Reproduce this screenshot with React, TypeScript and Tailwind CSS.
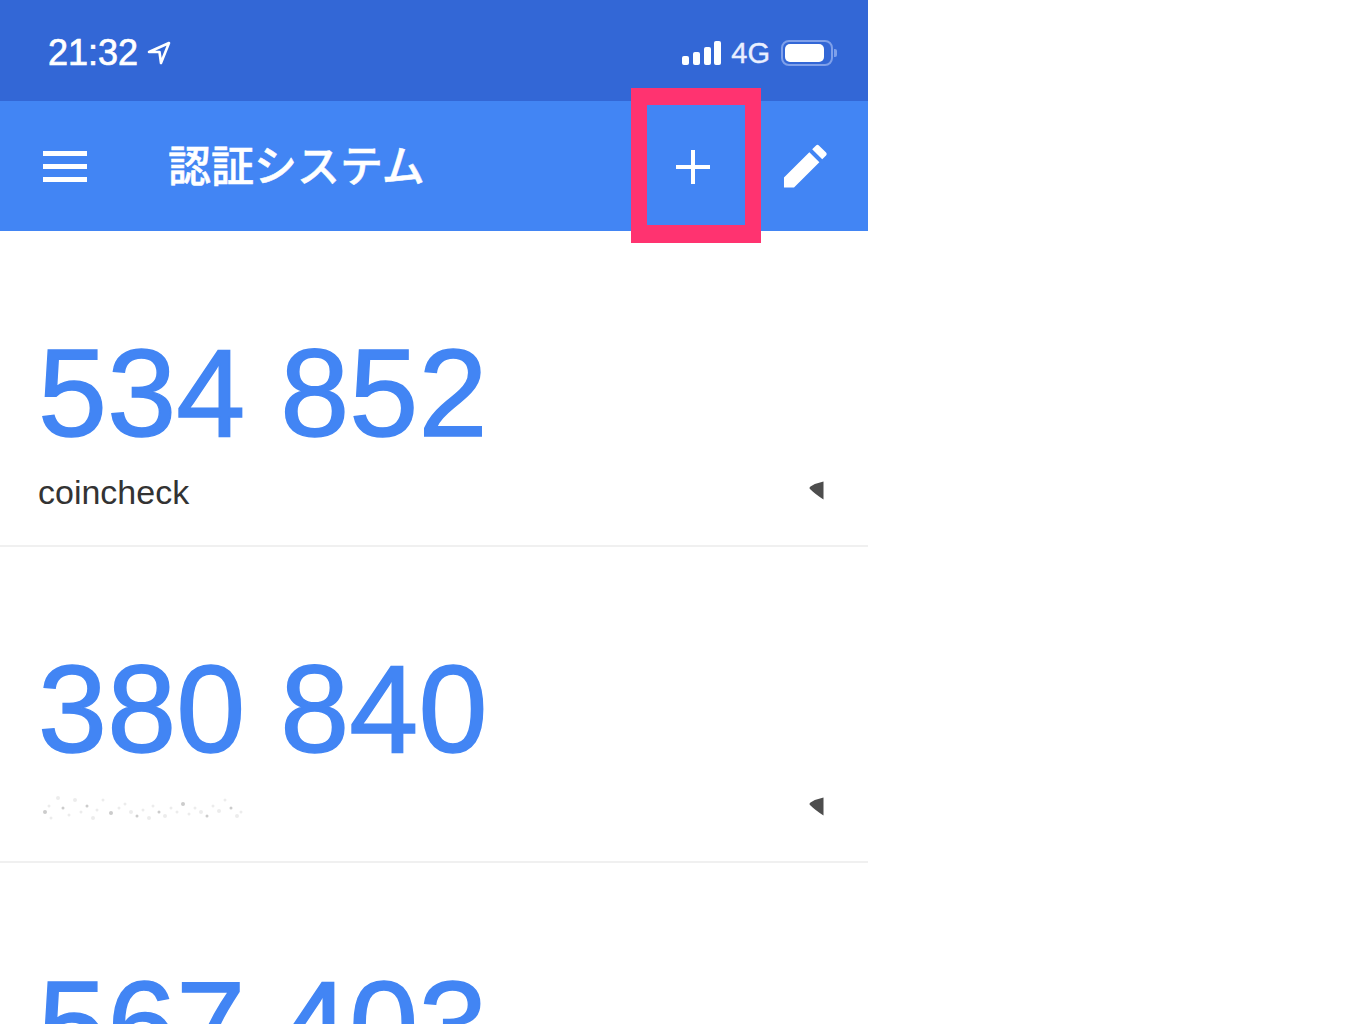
import React from "react";

const rows = [
  { code: "534 852", label: "coincheck" },
  { code: "380 840", label: "" },
  { code: "567 403", label: "" },
];

function Smudge() {
  const specks = [
    [42,812],[46,806],[48,818],[55,798],[60,808],[66,815],[72,800],[78,812],[84,806],[90,818],[94,810],[100,800],[108,813],
    [116,808],[122,804],[128,812],[134,816],[140,810],[146,818],[150,806],[156,812],[162,816],[168,808],[174,812],[180,804],
    [186,814],[192,808],[198,812],[204,816],[210,806],[216,811],[222,800],[228,808],[234,816],[238,812],
  ];
  return (
    <svg width="210" height="30" viewBox="35 793 210 30" className="block blur-[0.6px]">
      {specks.map(([x, y], i) => (
        <circle key={i} cx={x} cy={y} r={i % 3 === 0 ? 2 : 1.5} fill={i % 4 === 0 ? "#cccccc" : "#ececec"} />
      ))}
    </svg>
  );
}

function Row({ code, label, index }: { code: string; label: string; index: number }) {
  return (
    <div className="relative h-[316px] shrink-0 border-b-2 border-[#f0f0f0]">
      <div className="pt-[92px] pl-[38px] text-[124px] leading-[140px] tracking-[0.2px] text-[#4285f4] [-webkit-text-stroke:1.5px_#4285f4] font-['Liberation_Sans',Arial,sans-serif]">
        {code}
      </div>
      <div className="mt-[14px] flex h-[30px] items-center justify-between pl-[38px] pr-[44px]">
        {label ? (
          <span className="text-[34px] leading-[30px] text-[#333333] font-['Liberation_Sans',Arial,sans-serif]">{label}</span>
        ) : (
          <Smudge />
        )}
        {index < 2 && (
          <svg width="15" height="19" viewBox="0 0 15 19" className="block -translate-y-[2px]">
            <path d="M0.5 7 Q0.5 6.2 1.5 5.6 Q7 2 14.5 0.5 L14.5 18.5 Q6 13 1 8 Q0.5 7.6 0.5 7 Z" fill="#4d4d4d" />
          </svg>
        )}
      </div>
    </div>
  );
}

export default function App() {
  return (
    <div className="relative h-[1024px] w-[1358px] overflow-hidden bg-white">
      <div className="flex h-[1024px] w-[868px] flex-col overflow-hidden">
        <div className="flex h-[101px] shrink-0 items-center justify-between bg-[#3367d6] pl-[48px] pr-[31px] pt-[5px] text-white">
          <div className="flex items-center gap-[9px]">
            <span className="text-[36px] leading-[40px] [-webkit-text-stroke:0.7px_white] font-['Liberation_Sans',Arial,sans-serif]">21:32</span>
            <svg width="24" height="24" viewBox="0 0 24 24" fill="none" stroke="white" strokeWidth="2.6" strokeLinejoin="round" className="block">
              <path d="M2 11 L22 2 L14 22 L12.5 11 Z" />
            </svg>
          </div>
          <div className="flex items-center">
            <div className="flex items-end gap-[3.67px]">
              <div className="h-[9px] w-[7px] rounded-[2px] bg-white" />
              <div className="h-[13px] w-[7px] rounded-[2px] bg-white" />
              <div className="h-[18px] w-[7px] rounded-[2px] bg-white" />
              <div className="h-[24px] w-[7px] rounded-[2px] bg-white" />
            </div>
            <span className="ml-[10px] text-[29px] leading-[32px] text-[#e9efff] [-webkit-text-stroke:0.4px_#e9efff] font-['Liberation_Sans',Arial,sans-serif]">4G</span>
            <div className="ml-[11px] flex items-center gap-[1px]">
              <div className="flex h-[26px] w-[52px] items-center rounded-[8px] border-2 border-[#7fa0ea] p-[2px]">
                <div className="h-full w-[39px] rounded-[5px] bg-white" />
              </div>
              <div className="h-[8px] w-[3px] rounded-r-[2px] bg-[#7fa0ea]" />
            </div>
          </div>
        </div>
        <div className="flex h-[130px] shrink-0 items-center bg-[#4285f4] text-white">
          <div className="ml-[43px] flex w-[44px] flex-col gap-[8px]">
            <div className="h-[5px] bg-white" />
            <div className="h-[5px] bg-white" />
            <div className="h-[5px] bg-white" />
          </div>
          <div className="ml-[81px] -translate-y-[3px] text-[43px] leading-[50px] font-medium [-webkit-text-stroke:0.5px_white] font-['Noto_Sans_CJK_JP','Noto_Sans_CJK_SC',sans-serif]">
            認証システム
          </div>
          <div className="ml-auto mr-[40px] flex items-center gap-[73px]">
            <svg width="34" height="34" viewBox="0 0 34 34" className="block translate-y-[1px]">
              <path d="M15 0h4v15h15v4H19v15h-4V19H0v-4h15z" fill="white" />
            </svg>
            <svg width="45" height="44" viewBox="0 0 46 46" className="block">
              <path d="M0.5 35 L27 8.5 L37.5 19 L11 45.5 H0.5 Z M30 5.5 L34 1.5 Q35.5 0 37 1.5 L44.5 9 Q46 10.5 44.5 12 L40.5 16 Z" fill="white" />
            </svg>
          </div>
        </div>
        {rows.map((r, i) => (
          <Row key={r.code} code={r.code} label={r.label} index={i} />
        ))}
      </div>
      <div className="absolute left-[631px] top-[88px] h-[155px] w-[130px] border-x-[16px] border-t-[17px] border-b-[18px] border-[#ff3370]" />
    </div>
  );
}
